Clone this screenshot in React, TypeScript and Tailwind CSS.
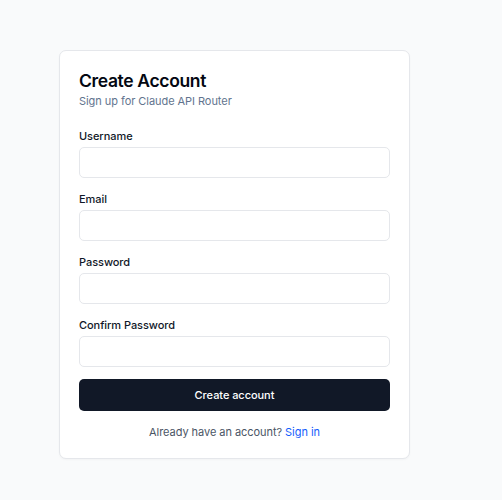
import React from "react";

function Field({ label, type }: { label: string; type: string }) {
  return (
    <div className="flex flex-col">
      <label className="text-[11px] leading-4 font-medium tracking-[-0.005em] text-gray-900">{label}</label>
      <input
        type={type}
        className="mt-[3px] h-[31px] w-full rounded-[5px] border border-gray-200 bg-white px-2 text-[11px] outline-none"
      />
    </div>
  );
}

export default function App() {
  return (
    <div
      className="min-h-[500px] w-full bg-[#f9fafb] pl-[59px] pt-[50px]"
      style={{ fontFamily: "Inter, 'Noto Sans', sans-serif" }}
    >
      <div className="w-[351px] rounded-[7px] border border-gray-200 bg-white px-[19px] pt-[19px] pb-[18px] shadow-[0_1px_2px_rgba(0,0,0,0.03)]">
        <h1 className="text-[17.5px] leading-[22px] font-semibold tracking-[-0.02em] text-gray-950">Create Account</h1>
        <p className="mt-[1px] text-[11px] leading-4 tracking-[-0.005em] text-slate-500">Sign up for Claude API Router</p>
        <div className="mt-[19px] flex flex-col gap-[13px]">
          <Field label="Username" type="text" />
          <Field label="Email" type="email" />
          <Field label="Password" type="password" />
          <Field label="Confirm Password" type="password" />
        </div>
        <button className="mt-[12px] h-[32px] w-full rounded-[5px] bg-[#111827] text-[11px] font-medium tracking-[-0.005em] text-white">
          Create account
        </button>
        <p className="mt-[13px] text-center text-[11px] leading-4 tracking-[-0.005em] text-gray-600">
          Already have an account? <span className="text-blue-600">Sign in</span>
        </p>
      </div>
    </div>
  );
}
